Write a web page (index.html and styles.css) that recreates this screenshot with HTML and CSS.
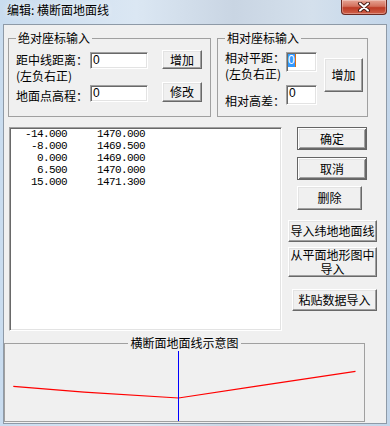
FILE: index.html
```html
<!DOCTYPE html>
<html>
<head>
    <meta charset="utf-8">
    <title>编辑: 横断面地面线</title>
    <link rel="stylesheet" href="styles.css">
</head>
<body>
    <div class="window">
        <div class="title-bar">
            <span class="title-text">编辑: 横断面地面线</span>
            <div class="close-btn">
                <svg width="14" height="10" viewBox="0 0 14 10">
                    <path d="M3 1.5 L11 8.5 M11 1.5 L3 8.5" stroke="#4a1d16" stroke-width="4" stroke-linecap="round"/>
                    <path d="M3 1.5 L11 8.5 M11 1.5 L3 8.5" stroke="#fff" stroke-width="2" stroke-linecap="round"/>
                </svg>
            </div>
        </div>

        <div class="client">
            <div class="input-row">
                <fieldset class="group group-abs">
                    <legend>绝对座标输入</legend>
                    <div class="abs-row abs-row-1">
                        <div class="label">距中线距离：<br>(左负右正)</div>
                        <div class="edit">0</div>
                        <button class="btn">增加</button>
                    </div>
                    <div class="abs-row abs-row-2">
                        <div class="label">地面点高程：</div>
                        <div class="edit">0</div>
                        <button class="btn">修改</button>
                    </div>
                </fieldset>

                <fieldset class="group group-rel">
                    <legend>相对座标输入</legend>
                    <div class="rel-grid">
                        <div class="label rel-label-1">相对平距：<br>(左负右正)</div>
                        <div class="edit rel-edit-1"><span class="sel">0</span><span class="caret"></span></div>
                        <button class="btn rel-add">增加</button>
                        <div class="label rel-label-2">相对高差：</div>
                        <div class="edit rel-edit-2">0</div>
                    </div>
                </fieldset>
            </div>

            <div class="mid-row">
                <div class="listbox">
<pre>  -14.000     1470.000
   -8.000     1469.500
    0.000     1469.000
    6.500     1470.000
   15.000     1471.300</pre>
                </div>
                <div class="side-buttons">
                    <button class="btn btn-default btn-ok">确定</button>
                    <button class="btn btn-default btn-cancel">取消</button>
                    <button class="btn btn-delete">删除</button>
                    <button class="btn btn-wide btn-import">导入纬地地面线</button>
                    <button class="btn btn-wide btn-plan">从平面地形图中<br>导入</button>
                    <button class="btn btn-paste">粘贴数据导入</button>
                </div>
            </div>

            <fieldset class="group group-chart">
                <legend>横断面地面线示意图</legend>
                <svg class="chart" width="359" height="71" viewBox="5 350 359 71">
                    <polyline points="13.3,386.4 84.1,392.2 178.5,398 255.2,386.4 355.5,371.3" fill="none" stroke="#ff0000" stroke-width="1.2"/>
                    <line x1="178.5" y1="351" x2="178.5" y2="421" stroke="#0000ff" stroke-width="1"/>
                </svg>
            </fieldset>
        </div>
    </div>
</body>
</html>
```

FILE: styles.css
```css
body {
    margin: 0;
    font-family: "Noto Sans CJK SC", sans-serif;
    font-size: 12px;
    color: #000;
}
.window {
    width: 390px;
    height: 426px;
    overflow: hidden;
    background: linear-gradient(to right, #c9dcef 0%, #dbe7f3 35%, #c9d5e3 60%, #d4e0ec 80%, #c3d6ea 100%);
}
.title-bar {
    height: 24px;
    display: flex;
    justify-content: space-between;
    align-items: flex-start;
}
.title-text {
    margin: 3px 0 0 7px;
    line-height: 14px;
    text-shadow: 0 0 6px rgba(255,255,255,0.9);
}
.close-btn {
    width: 46px;
    height: 15px;
    margin-right: 3px;
    box-sizing: border-box;
    border: 1px solid #6b2a22;
    border-top: none;
    border-radius: 0 0 4px 4px;
    background: linear-gradient(#e6a595, #d3705c 45%, #bd3b25 55%, #d0614a);
    box-shadow: inset 0 0 0 1px rgba(255,255,255,0.3);
    display: flex;
    align-items: center;
    justify-content: center;
}
.client {
    margin-left: 3px;
    width: 384px;
    height: 400px;
    box-sizing: border-box;
    border: 1px solid #8e9aa7;
    background: #f0f0f0;
}

/* group boxes */
.group {
    margin: 0;
    padding: 0;
    min-width: 0;
    box-sizing: border-box;
    border: 1px solid #a0a0a0;
}
.group legend {
    padding: 0 2px;
    line-height: 14px;
    font-size: 12px;
}
.input-row {
    display: flex;
    padding: 6px 0 0 4px;
}
.group-abs {
    width: 203px;
    height: 86px;
    padding: 5px 0 0 7px;
}
.group-rel {
    width: 151px;
    height: 86px;
    margin-left: 6px;
    padding: 5px 0 0 7px;
}
.label {
    white-space: nowrap;
}

/* edit boxes */
.edit {
    box-sizing: border-box;
    background: #fff;
    border: 1px solid;
    border-color: #a0a0a0 #fff #fff #a0a0a0;
    box-shadow: inset 1px 1px #696969, inset -1px -1px #e3e3e3;
    padding: 0 0 0 2px;
    font-family: "Liberation Sans", Arial, sans-serif;
    font-size: 12px;
    line-height: 14px;
}

/* push buttons */
.btn {
    box-sizing: border-box;
    margin: 0;
    padding: 0;
    font-family: inherit;
    font-size: 12px;
    line-height: 14px;
    color: #000;
    background: #f0f0f0;
    border: 1px solid;
    border-color: #fff #696969 #696969 #fff;
    box-shadow: inset -1px -1px #a0a0a0, inset 1px 1px #e3e3e3;
    display: flex;
    align-items: center;
    justify-content: center;
    text-align: center;
}
.btn-default {
    border-color: #646464;
    box-shadow: inset 1px 1px #fff, inset -1px -1px #696969, inset 2px 2px #e3e3e3, inset -2px -2px #a0a0a0;
}

/* absolute input rows */
.abs-row {
    display: flex;
    align-items: flex-start;
}
.abs-row .label {
    width: 74px;
    line-height: 16px;
}
.abs-row .edit {
    width: 58px;
    height: 17px;
}
.abs-row .btn {
    width: 40px;
    margin-left: 14px;
}
.abs-row-1 {
    height: 32px;
}
.abs-row-1 .label {
    margin-top: 2px;
}
.abs-row-1 .edit {
    margin-top: 2px;
}
.abs-row-1 .btn {
    height: 19px;
}
.abs-row-2 .label {
    margin-top: 6px;
}
.abs-row-2 .edit {
    margin-top: 3px;
}
.abs-row-2 .btn {
    height: 20px;
}

/* relative input grid */
.rel-grid {
    display: grid;
    grid-template-columns: 61px 31px 46px;
    grid-template-rows: 33px 22px;
    align-items: start;
}
.rel-label-1 {
    line-height: 16px;
}
.rel-edit-1,
.rel-edit-2 {
    width: 31px;
    height: 20px;
    margin-top: 2px;
}
.rel-edit-1 {
    padding-left: 1px;
    display: flex;
    align-items: flex-start;
}
.sel {
    margin-top: 1px;
    height: 13px;
    line-height: 13px;
    background: #3399ff;
    color: #fff;
}
.caret {
    margin-top: 1px;
    width: 1px;
    height: 13px;
    background: #d9700f;
}
.rel-add {
    grid-column: 3;
    grid-row: 1 / span 2;
    justify-self: end;
    width: 39px;
    height: 34px;
    margin-top: 8px;
}
.rel-label-2 {
    grid-row: 2;
    grid-column: 1;
    margin-top: 10px;
    line-height: 16px;
}
.rel-edit-2 {
    grid-row: 2;
    grid-column: 2;
}

/* list and side buttons */
.mid-row {
    display: flex;
    align-items: flex-start;
    margin-top: 10px;
    padding-left: 5px;
}
.listbox {
    width: 273px;
    height: 204px;
    box-sizing: border-box;
    background: #fff;
    border: 1px solid;
    border-color: #a0a0a0 #fff #fff #a0a0a0;
    box-shadow: inset 1px 1px #696969, inset -1px -1px #e3e3e3;
    padding: 0 0 0 3px;
}
.listbox pre {
    margin: 0;
    font-family: "Liberation Mono", "DejaVu Sans Mono", monospace;
    font-size: 11px;
    letter-spacing: -0.6px;
    line-height: 12px;
}
.side-buttons {
    margin-left: 6px;
    display: flex;
    flex-direction: column;
    align-items: flex-start;
}
.btn-ok,
.btn-cancel {
    width: 70px;
    height: 23px;
    margin-left: 9px;
}
.btn-cancel {
    margin-top: 7px;
}
.btn-delete {
    width: 65px;
    height: 24px;
    margin: 6px 0 0 9px;
}
.btn-wide {
    width: 89px;
}
.btn-import {
    height: 22px;
    margin-top: 10px;
}
.btn-plan {
    height: 30px;
    margin-top: 5px;
    line-height: 14px;
}
.btn-paste {
    width: 85px;
    height: 22px;
    margin: 12px 0 0 4px;
}

/* chart group */
.group-chart {
    width: 361px;
    height: 86px;
    margin-top: 5px;
}
.group-chart legend {
    margin: 0 auto;
}
.chart {
    display: block;
}
```
